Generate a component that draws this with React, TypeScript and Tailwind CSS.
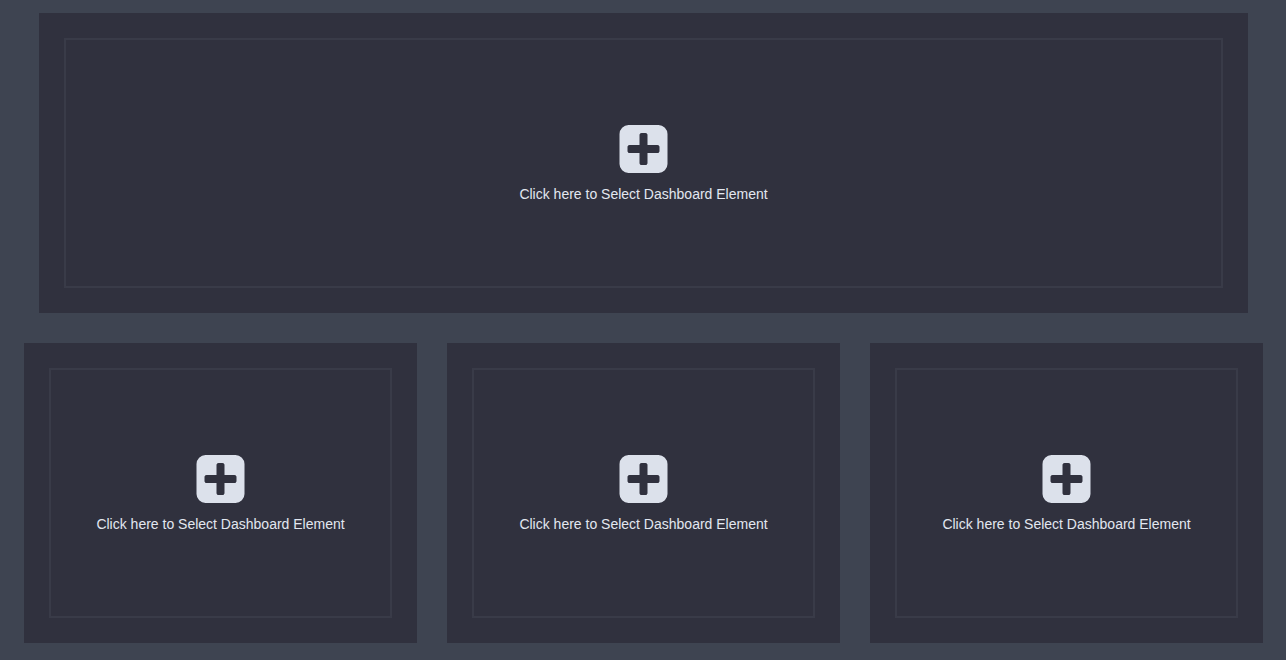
function PlusSquareIcon() {
  return (
    <svg viewBox="128 128 1536 1536" className="h-12 w-[49px] fill-[#dce1eb]" aria-hidden="true">
      <path d="M1408 960v-128q0-26-19-45t-45-19h-320v-320q0-26-19-45t-45-19h-128q-26 0-45 19t-19 45v320h-320q-26 0-45 19t-19 45v128q0 26 19 45t45 19h320v320q0 26 19 45t45 19h128q26 0 45-19t19-45v-320h320q26 0 45-19t19-45zm256-544v960q0 119-84.5 203.5t-203.5 84.5h-960q-119 0-203.5-84.5t-84.5-203.5v-960q0-119 84.5-203.5t203.5-84.5h960q119 0 203.5 84.5t84.5 203.5z" />
    </svg>
  );
}

function DashboardSlot() {
  return (
    <section className="bg-[#30313e] p-[25px]">
      <button
        type="button"
        className="flex min-h-[250px] w-full cursor-pointer flex-col items-center justify-center gap-[11px] border-2 border-[#393b48] pt-[2px] text-sm text-[#e2e7f0]"
      >
        <PlusSquareIcon />
        <span>Click here to Select Dashboard Element</span>
      </button>
    </section>
  );
}

export default function App() {
  return (
    <main className="flex min-h-screen flex-col gap-[30px] bg-[#3e4451] pt-[13px] pr-[23px] pb-[17px] pl-6 font-['Liberation_Sans',Arial,sans-serif]">
      <div className="px-[15px]">
        <DashboardSlot />
      </div>
      <div className="grid grid-cols-3 gap-[30px]">
        <DashboardSlot />
        <DashboardSlot />
        <DashboardSlot />
      </div>
    </main>
  );
}
